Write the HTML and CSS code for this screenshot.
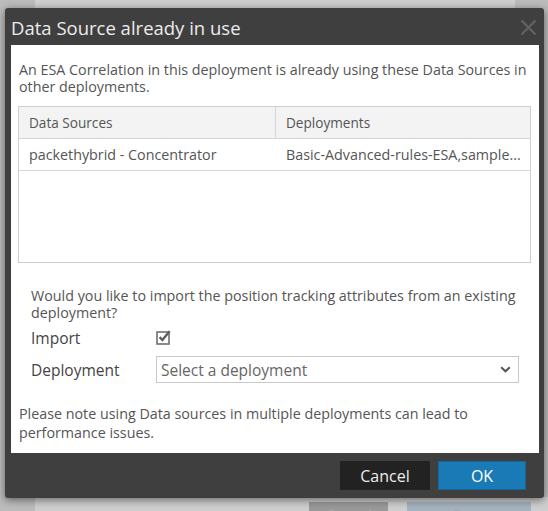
FILE: index.html
```html
<!DOCTYPE html>
<html>
<head>
<meta charset="utf-8">
<link rel="stylesheet" href="styles.css">
</head>
<body>
<div class="page">
  <div class="panel"></div>
  <div class="panel-footer">
    <span class="ghost-btn ghost-cancel">Cancel</span>
    <span class="ghost-btn ghost-save">Save</span>
  </div>
</div>

<div class="dialog">
  <div class="dialog-title">
    <span class="title-text">Data Source already in use</span>
    <svg class="close" width="17" height="17" viewBox="0 0 17 17"><path d="M1.5 1.5 L15.5 15.5 M15.5 1.5 L1.5 15.5" stroke="#626262" stroke-width="2.2" fill="none"/></svg>
  </div>
  <div class="dialog-body">
    <p class="intro">An ESA Correlation in this deployment is already using these Data Sources in other deployments.</p>
    <div class="grid">
      <div class="grid-head">
        <div class="cell c1">Data Sources</div>
        <div class="cell c2">Deployments</div>
      </div>
      <div class="grid-row">
        <div class="cell c1">packethybrid - Concentrator</div>
        <div class="cell c2 ellipsis">Basic-Advanced-rules-ESA,sample...</div>
      </div>
      <div class="grid-empty"></div>
    </div>
    <div class="form">
      <p class="question">Would you like to import the position tracking attributes from an existing deployment?</p>
      <div class="form-row row-import">
        <span class="label">Import</span>
        <svg class="check" width="16" height="16" viewBox="0 0 16 16"><rect x="1" y="3" width="12" height="12" fill="none" stroke="#707070" stroke-width="1.6"/><path d="M3.6 8.2 L6.4 11 L13.6 2.2" fill="none" stroke="#606060" stroke-width="2.4"/></svg>
      </div>
      <div class="form-row row-deploy">
        <span class="label">Deployment</span>
        <div class="select">
          <span class="placeholder">Select a deployment</span>
          <svg class="chev" width="11" height="7" viewBox="0 0 11 7"><path d="M1.2 1.2 L5.5 5.3 L9.8 1.2" fill="none" stroke="#555" stroke-width="2"/></svg>
        </div>
      </div>
    </div>
    <p class="note">Please note using Data sources in multiple deployments can lead to performance issues.</p>
  </div>
  <div class="dialog-footer">
    <button class="btn btn-cancel">Cancel</button>
    <button class="btn btn-ok">OK</button>
  </div>
</div>
</body>
</html>
```

FILE: styles.css
```css
html, body {
  margin: 0;
  padding: 0;
}
body {
  width: 548px;
  height: 511px;
  overflow: hidden;
  background: #bcbcbc;
  font-family: "Open Sans", "Liberation Sans", sans-serif;
  position: relative;
}
.page {
  height: 511px;
  display: flex;
  flex-direction: column;
}
.panel {
  flex: 1;
  margin: 0 33px 0 35px;
  background: #cfcfcf;
}
.panel-footer {
  height: 14px;
  display: flex;
  justify-content: flex-end;
  gap: 19px;
  padding-right: 17px;
  background: #cfcfcf;
  margin-left: 35px;
}
.ghost-btn {
  display: block;
  height: 24px;
  margin-top: 5px;
  font-size: 15px;
  line-height: 24px;
  text-align: center;
  color: #a8a8a8;
}
.ghost-cancel {
  width: 79px;
  background: #9a9a9a;
}
.ghost-save {
  width: 124px;
  background: #a6b4bf;
}

.dialog {
  position: absolute;
  left: 5px;
  top: 8px;
  width: 539px;
  height: 490px;
  box-sizing: border-box;
  background: #3f3f3f;
  border-radius: 3px;
  padding: 0 5px 0 6px;
  display: flex;
  flex-direction: column;
  box-shadow: 0 2px 8px rgba(0,0,0,0.5);
}
.dialog-title {
  height: 37px;
  display: flex;
  align-items: center;
  justify-content: space-between;
}
.title-text {
  color: #ececec;
  font-size: 18.5px;
  line-height: 26px;
  margin-top: 2px;
}
.close {
  margin-right: 2px;
  margin-top: 1px;
}
.dialog-body {
  background: #ffffff;
  height: 408px;
  box-sizing: border-box;
  padding: 16px 8px 0 8px;
  color: #555;
}
.intro {
  margin: 0;
  font-size: 14.3px;
  line-height: 17px;
}
.grid {
  margin: 11px 0 0 -1px;
  border: 1px solid #cfcfcf;
  height: 157px;
  box-sizing: border-box;
  font-size: 14.3px;
}
.grid-head, .grid-row {
  display: flex;
  height: 32px;
  border-bottom: 1px solid #d6d6d6;
  box-sizing: border-box;
}
.grid-head {
  background: #f3f3f3;
  font-size: 13.6px;
  color: #555;
}
.cell {
  padding: 0 10px;
  display: flex;
  align-items: center;
  box-sizing: border-box;
  white-space: nowrap;
  overflow: hidden;
}
.c1 {
  width: 257px;
}
.grid-head .c1 {
  border-right: 1px solid #d6d6d6;
}
.grid-row .c1 {
  border-right: 1px solid transparent;
}
.c2 {
  flex: 1;
  min-width: 0;
}
.ellipsis {
  display: block;
  line-height: 31px;
  padding-right: 2px;
}
.form {
  padding: 24px 0 0 12px;
}
.question {
  margin: 0;
  font-size: 14.3px;
  line-height: 17px;
}
.form-row {
  display: flex;
  align-items: center;
}
.label {
  width: 125px;
  font-size: 15.5px;
  color: #444;
}
.row-import {
  height: 24px;
  margin-top: 5px;
}
.check {
  margin-top: -3px;
}
.row-deploy {
  margin-top: 6px;
}
.select {
  width: 363px;
  height: 27px;
  border: 1px solid #c8c8c8;
  box-sizing: border-box;
  display: flex;
  align-items: center;
  justify-content: space-between;
  padding: 0 7px 0 4px;
}
.placeholder {
  font-size: 15.5px;
  color: #666;
}
.note {
  margin: 21px 0 0 0;
  font-size: 14.3px;
  line-height: 19px;
}
.dialog-footer {
  flex: 1;
  display: flex;
  justify-content: flex-end;
  align-items: flex-start;
  padding: 8px 13px 0 0;
  gap: 8px;
}
.btn {
  height: 29px;
  border: none;
  font-family: "Open Sans", "Liberation Sans", sans-serif;
  font-size: 16px;
  padding: 0;
  margin: 0;
}
.btn-cancel {
  width: 90px;
  background: #222222;
  color: #ededed;
}
.btn-ok {
  width: 88px;
  background: #1a7ab6;
  color: #ffffff;
  border: 1px solid #16669a;
}
```
